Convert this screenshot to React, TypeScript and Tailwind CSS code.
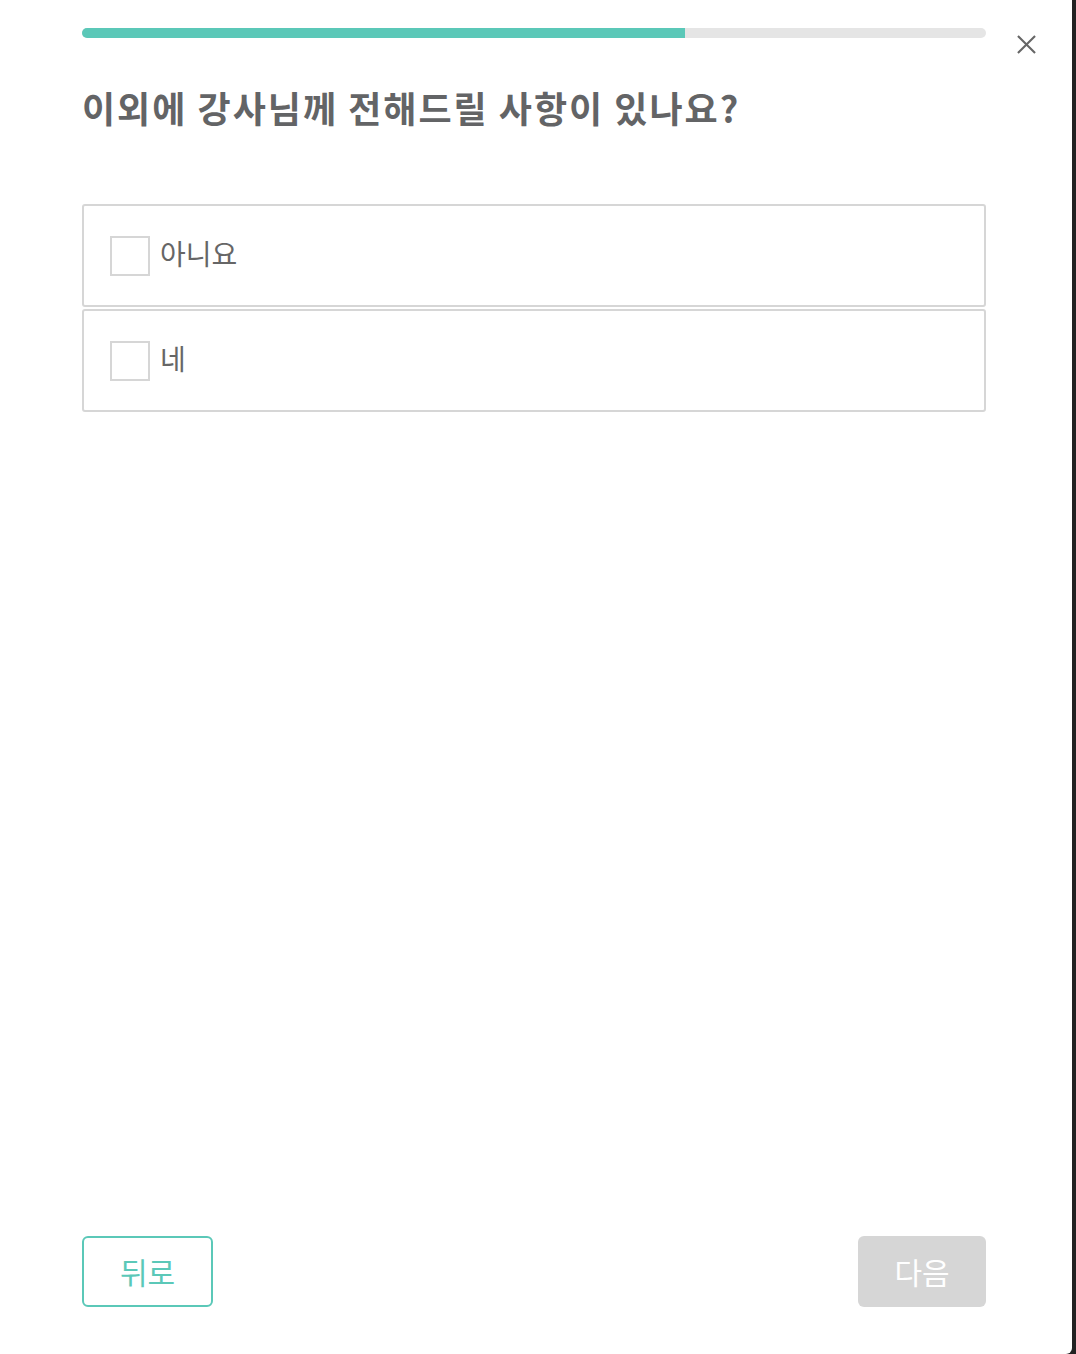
import { useState } from "react";

const options = ["아니요", "네"];

export default function App() {
  const [checked, setChecked] = useState<number | null>(null);

  return (
    <div
      className="flex h-[1354px] w-full bg-[#222222]"
      style={{ fontFamily: '"Noto Sans CJK KR", "Noto Sans", sans-serif' }}
    >
      <div className="relative flex w-[1072px] flex-col rounded-br-[6px] bg-white pl-[82px] pr-[86px]">
        <div className="mt-[28px] h-[10px] w-full overflow-hidden rounded-full bg-[#e5e5e5]">
          <div className="h-full w-[603px] bg-[#5bc8b8]" />
        </div>

        <button className="absolute right-[36px] top-[34px] flex h-[20px] w-[20px] items-center justify-center text-[#666]">
          <svg width="19" height="19" viewBox="0 0 20 20" fill="none" stroke="currentColor" strokeWidth="2.2">
            <path d="M1 1L19 19M19 1L1 19" />
          </svg>
        </button>

        <h1 className="mt-[44px] text-[36px] font-bold leading-[50px] tracking-[2px] text-[#636466]">
          이외에 강사님께 전해드릴 사항이 있나요?
        </h1>

        <div className="mt-[72px] flex flex-col gap-[2px]">
          {options.map((o, i) => (
            <label
              key={o}
              onClick={() => setChecked(i)}
              className="flex h-[103px] cursor-pointer items-center rounded-[3px] border-2 border-[#d6d6d6] pl-[26px]"
            >
              <span
                className={
                  "h-[40px] w-[40px] border-2 " +
                  (checked === i ? "border-[#5bc8b8] bg-[#5bc8b8]" : "border-[#d6d6d6] bg-white")
                }
              />
              <span className="mb-[5px] ml-[10px] text-[28px] leading-none text-[#666666]">{o}</span>
            </label>
          ))}
        </div>

        <div className="mt-auto mb-[47px] flex justify-between">
          <button className="h-[71px] w-[131px] rounded-[6px] border-2 border-[#5bc8b8] text-[30px] text-[#5bc8b8]">
            뒤로
          </button>
          <button
            disabled={checked === null}
            className={
              "h-[71px] w-[128px] rounded-[6px] text-[30px] text-white " +
              (checked === null ? "bg-[#d6d6d6]" : "bg-[#5bc8b8]")
            }
          >
            다음
          </button>
        </div>
      </div>
    </div>
  );
}
